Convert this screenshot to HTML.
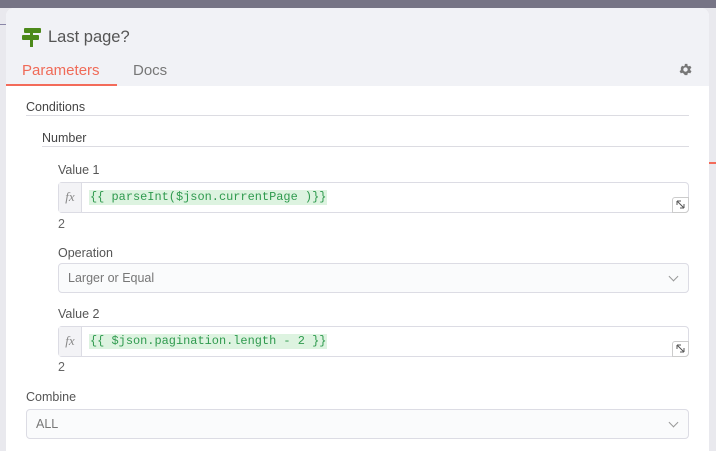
<!DOCTYPE html>
<html><head><style>
*{margin:0;padding:0;box-sizing:border-box}
html,body{width:716px;height:451px;overflow:hidden}
body{background:#e9e9ee;font-family:"Liberation Sans",sans-serif;position:relative}
.top{position:absolute;left:0;top:0;width:716px;height:8px;background:#767485}
.panel{position:absolute;left:6px;top:8px;width:703px;height:443px;background:#fff;border-radius:8px 8px 0 0;overflow:hidden}
.head{position:absolute;left:0;top:0;width:703px;height:78px;background:#f1f2f6}
.abs{position:absolute}
.t{position:absolute;font-size:12.5px;color:#555}
.line{position:absolute;height:1px;background:#dcdce2}
.inp{position:absolute;border:1px solid #dcdce4;border-radius:4px;background:#fff}
.sel{position:absolute;border:1px solid #dcdce4;border-radius:4px;background:#fafbfc;font-size:12.5px;color:#777;padding-left:9px;line-height:28px}
.fx{position:absolute;left:0;top:0;width:23px;height:100%;background:#f3f3f6;border-right:1px solid #dcdce4;font-family:"Liberation Serif",serif;font-style:italic;color:#888;font-size:13px;text-align:center;line-height:28px}
.code{position:absolute;left:30px;top:7px;font-family:"Liberation Mono",monospace;font-size:11.95px;color:#2f9a4e;background:#ddf3e0;padding:0 1px;line-height:15px}
.exp{position:absolute;right:-1px;bottom:-1px;width:17px;height:16px;border:1px solid #ccc;border-radius:3px 0 4px 0;background:#fff}
.chev{position:absolute;right:11px;top:9px;width:7px;height:7px;border-right:1px solid #999;border-bottom:1px solid #999;transform:rotate(45deg)}
</style></head><body>
<div class="top"></div>
<div class="abs" style="left:0;top:24px;width:6px;height:1px;background:#8a86a8"></div>
<div class="abs" style="left:708px;top:162px;width:8px;height:2px;background:#f36b5a"></div>
<div class="panel">
<div class="head"></div>
<svg class="abs" style="left:16px;top:20px" width="19" height="19" viewBox="0 0 19 19"><rect x="2" y="0" width="17" height="5" rx="1" fill="#4d8a1a"/><rect x="0" y="7" width="17" height="5" rx="1" fill="#4d8a1a"/><rect x="8" y="0" width="3" height="19" fill="#4d8a1a"/></svg>
<div class="abs" style="left:42px;top:20px;font-size:16.5px;color:#555">Last page?</div>
<div class="abs" style="left:16px;top:54px;font-size:15px;color:#f06b58">Parameters</div>
<div class="abs" style="left:127px;top:54px;font-size:15px;color:#777">Docs</div>
<div class="abs" style="left:0;top:76px;width:111px;height:2px;background:#f36b5a"></div>
<svg class="abs" style="left:672px;top:54px" width="15" height="15" viewBox="0 0 24 24"><path fill="#777" d="M19.4 13a7.5 7.5 0 000-2l2.1-1.6-2-3.5-2.5 1a7 7 0 00-1.7-1L15 3h-4l-.4 2.9a7 7 0 00-1.7 1l-2.5-1-2 3.5L4.6 11a7.5 7.5 0 000 2l-2.1 1.600 2 3.5 2.5-1a7 7 0 001.7 1L11 21h4l.4-2.9a7 7 0 001.7-1l2.5 1 2-3.5zM12 15.5a3.5 3.5 0 110-7 3.5 3.5 0 010 7z"/></svg>
<div class="t" style="left:20px;top:92px;color:#444">Conditions</div>
<div class="line" style="left:20px;top:107px;width:663px"></div>
<div class="t" style="left:36px;top:123px;color:#444">Number</div>
<div class="line" style="left:36px;top:138px;width:647px"></div>
<div class="t" style="left:52px;top:155px">Value 1</div>
<div class="inp" style="left:52px;top:174px;width:631px;height:31px"><div class="fx">fx</div><div class="code">{{ parseInt($json.currentPage )}}</div><div class="exp"><svg width="15" height="14" viewBox="0 0 15 14"><path d="M4 3h4M4 3v4M4 3l7 7M11 10H7M11 10V6" stroke="#555" stroke-width="1" fill="none"/></svg></div></div>
<div class="t" style="left:52px;top:209px;color:#666">2</div>
<div class="t" style="left:52px;top:238px">Operation</div>
<div class="sel" style="left:52px;top:255px;width:631px;height:30px">Larger or Equal<div class="chev"></div></div>
<div class="t" style="left:52px;top:299px">Value 2</div>
<div class="inp" style="left:52px;top:318px;width:631px;height:31px"><div class="fx">fx</div><div class="code">{{ $json.pagination.length - 2 }}</div><div class="exp"><svg width="15" height="14" viewBox="0 0 15 14"><path d="M4 3h4M4 3v4M4 3l7 7M11 10H7M11 10V6" stroke="#555" stroke-width="1" fill="none"/></svg></div></div>
<div class="t" style="left:52px;top:352px;color:#666">2</div>
<div class="t" style="left:20px;top:382px">Combine</div>
<div class="sel" style="left:20px;top:401px;width:663px;height:30px">ALL<div class="chev"></div></div>
</div>
</body></html>
